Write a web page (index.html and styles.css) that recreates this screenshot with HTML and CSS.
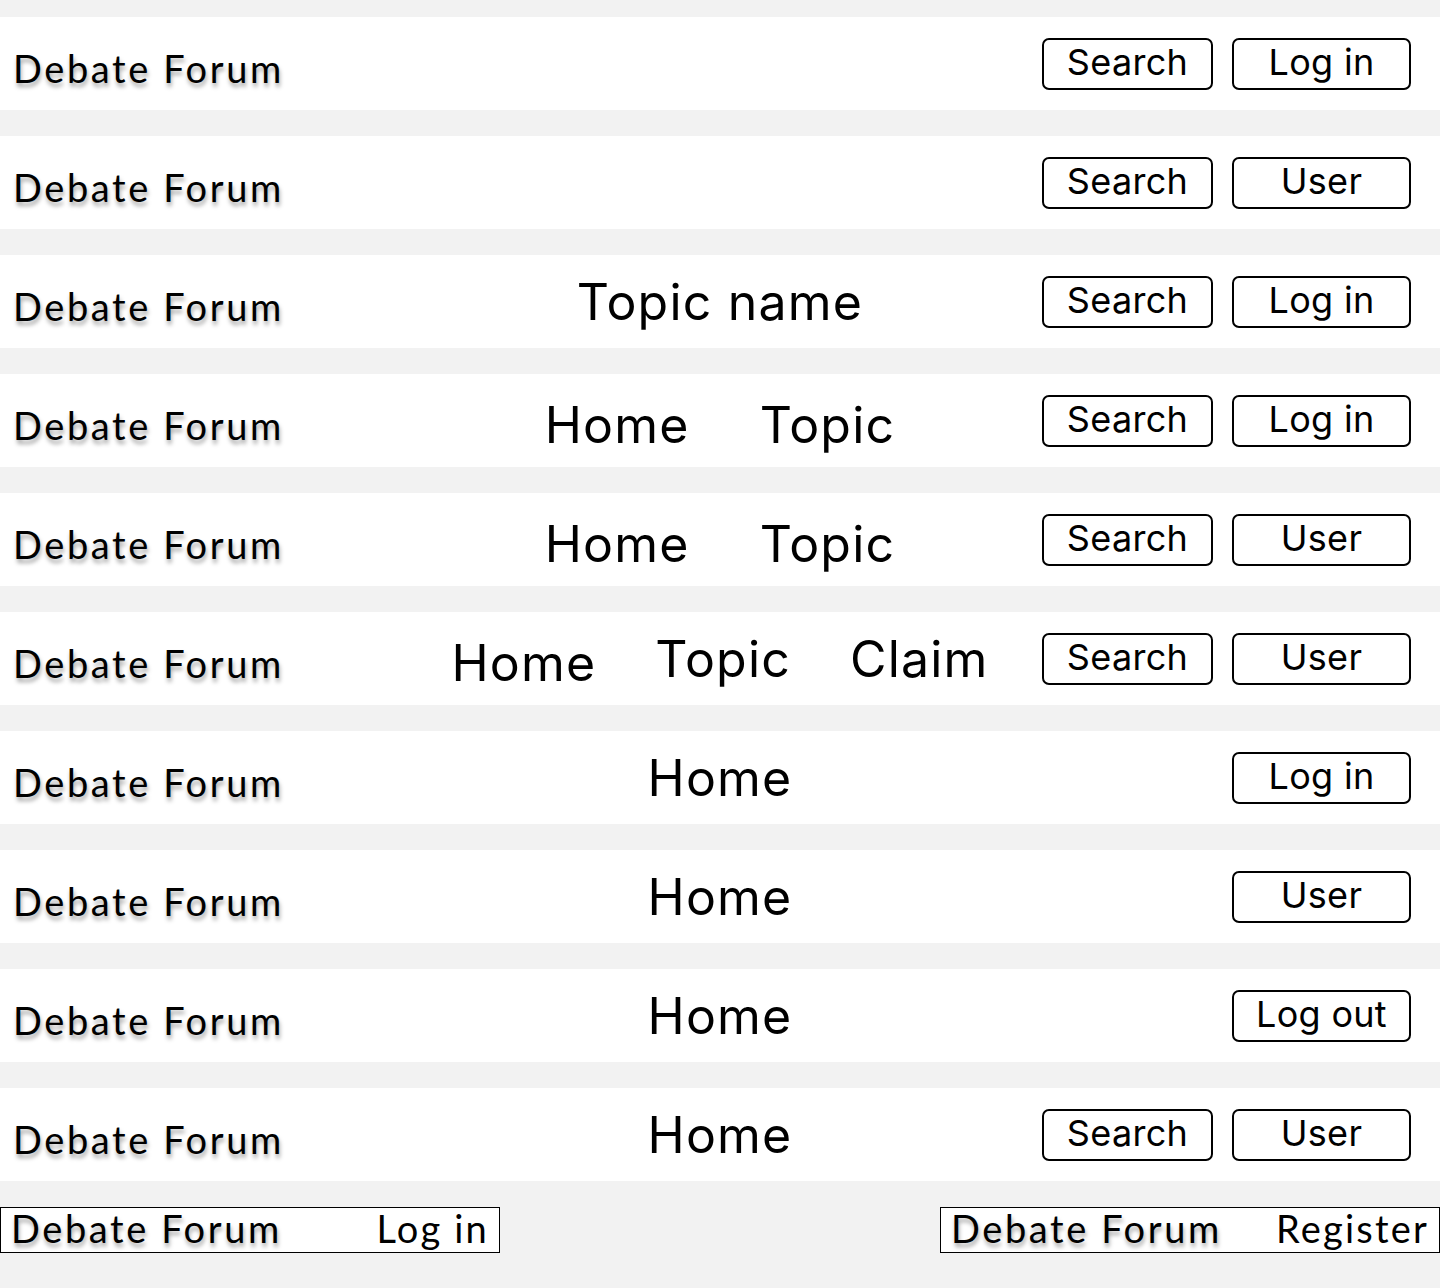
FILE: index.html
```html
<!DOCTYPE html>
<html lang="en">
<head>
<meta charset="utf-8">
<title>Debate Forum headers</title>
<link rel="stylesheet" href="styles.css">
</head>
<body>
<div class="page">
  <header class="bar">
    <div class="brand">Debate Forum</div>
    <nav class="center"></nav>
    <div class="actions"><button class="btn btn-search">Search</button><button class="btn">Log in</button></div>
  </header>
  <header class="bar">
    <div class="brand">Debate Forum</div>
    <nav class="center"></nav>
    <div class="actions"><button class="btn btn-search">Search</button><button class="btn">User</button></div>
  </header>
  <header class="bar">
    <div class="brand">Debate Forum</div>
    <nav class="center"><span class="link title">Topic name</span></nav>
    <div class="actions"><button class="btn btn-search">Search</button><button class="btn">Log in</button></div>
  </header>
  <header class="bar">
    <div class="brand">Debate Forum</div>
    <nav class="center two"><span class="link">Home</span><span class="link">Topic</span></nav>
    <div class="actions"><button class="btn btn-search">Search</button><button class="btn">Log in</button></div>
  </header>
  <header class="bar">
    <div class="brand">Debate Forum</div>
    <nav class="center two"><span class="link">Home</span><span class="link">Topic</span></nav>
    <div class="actions"><button class="btn btn-search">Search</button><button class="btn">User</button></div>
  </header>
  <header class="bar">
    <div class="brand">Debate Forum</div>
    <nav class="center three"><span class="link low">Home</span><span class="link">Topic</span><span class="link">Claim</span></nav>
    <div class="actions"><button class="btn btn-search">Search</button><button class="btn">User</button></div>
  </header>
  <header class="bar">
    <div class="brand">Debate Forum</div>
    <nav class="center"><span class="link">Home</span></nav>
    <div class="actions"><button class="btn">Log in</button></div>
  </header>
  <header class="bar">
    <div class="brand">Debate Forum</div>
    <nav class="center"><span class="link">Home</span></nav>
    <div class="actions"><button class="btn">User</button></div>
  </header>
  <header class="bar">
    <div class="brand">Debate Forum</div>
    <nav class="center"><span class="link">Home</span></nav>
    <div class="actions"><button class="btn">Log out</button></div>
  </header>
  <header class="bar">
    <div class="brand">Debate Forum</div>
    <nav class="center"><span class="link">Home</span></nav>
    <div class="actions"><button class="btn btn-search">Search</button><button class="btn">User</button></div>
  </header>
  <div class="mini-row">
    <div class="mini"><span class="brand-mini">Debate Forum</span><span class="mini-link">Log in</span></div>
    <div class="mini"><span class="brand-mini">Debate Forum</span><span class="mini-link">Register</span></div>
  </div>
</div>
</body>
</html>
```
FILE: styles.css
```css
html, body {
  margin: 0;
  padding: 0;
  background: #f2f2f2;
}
.page {
  padding-top: 17px;
  height: 1271px;
}
.bar {
  display: grid;
  grid-template-columns: 1fr auto 1fr;
  align-items: center;
  height: 93px;
  margin-bottom: 26px;
  background: #ffffff;
}
.brand, .brand-mini {
  font-family: "Lato", "Noto Sans", sans-serif;
  font-size: 38px;
  letter-spacing: 2.6px;
  color: #000;
  text-shadow: 1px 4px 4px rgba(0, 0, 0, 0.35);
}
.brand {
  padding-left: 13px;
  padding-top: 9px;
}
.center {
  display: flex;
  align-items: center;
  font-family: "Inter", "Open Sans", sans-serif;
  font-size: 50px;
  letter-spacing: 1.2px;
  color: #000;
}
.center.two { gap: 70px; padding-top: 8px; }
.center.three { gap: 59px; }
.link.low { position: relative; top: 4px; }
.actions {
  justify-self: end;
  display: flex;
  gap: 19px;
  padding-right: 29px;
}
.btn {
  box-sizing: border-box;
  width: 179px;
  height: 52px;
  padding: 0 0 4px;
  border: 2px solid #000;
  border-radius: 7px;
  background: #fff;
  font-family: "Inter", "Open Sans", sans-serif;
  font-size: 36px;
  letter-spacing: 0.3px;
  color: #000;
}
.btn-search { width: 171px; }
.mini-row {
  display: flex;
  justify-content: space-between;
}
.mini {
  box-sizing: border-box;
  width: 500px;
  height: 46px;
  border: 1px solid #000;
  background: #fff;
  display: flex;
  justify-content: space-between;
  align-items: flex-start;
  padding: 0 10px 0 10px;
  line-height: 40px;
}
.mini-link {
  font-family: "Lato", "Noto Sans", sans-serif;
  font-size: 38px;
  letter-spacing: 2.2px;
  color: #000;
}
```
